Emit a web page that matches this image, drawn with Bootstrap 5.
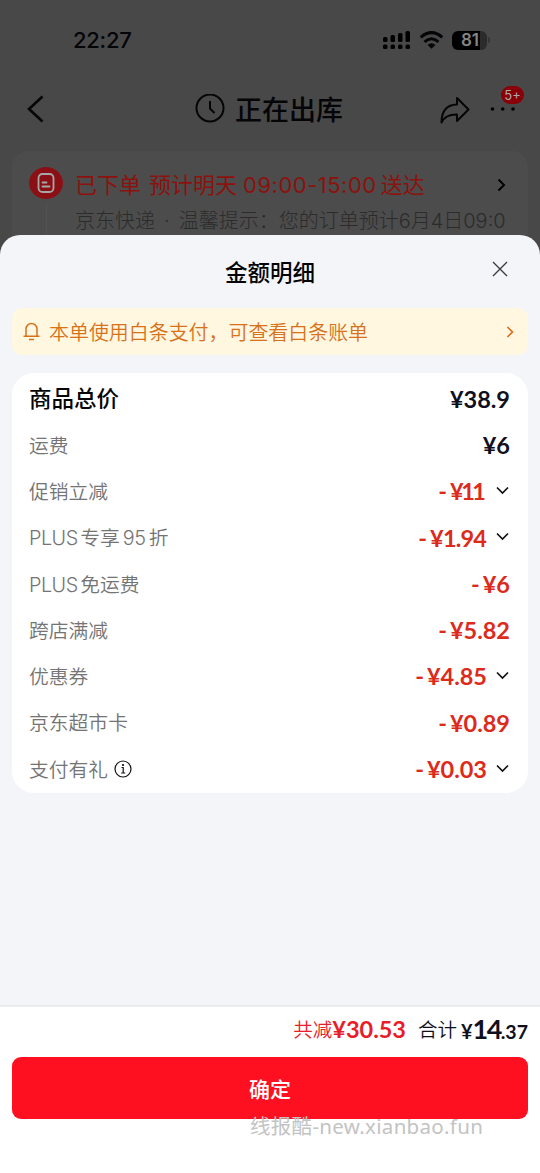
<!DOCTYPE html>
<html lang="zh-CN">
<head>
<meta charset="utf-8">
<meta name="viewport" content="width=device-width, initial-scale=1">
<title>金额明细</title>
<link rel="stylesheet" href="https://cdn.jsdelivr.net/npm/bootstrap@5.3.0/dist/css/bootstrap.min.css">
<style>
body{width:540px;height:1173px;overflow:hidden;background:#484848;color:#050508;font-family:Inter,"Noto Sans CJK SC",sans-serif;line-height:1}
svg{display:block;flex:none;fill:none;stroke:currentColor}
.solid{fill:#000;stroke:none}
.status{height:80px;padding:0 50px 0 73px}
.clock{font-size:22px;font-weight:500;letter-spacing:-.3px}
.batt{width:35px;height:19px;border-radius:6px;background:linear-gradient(90deg,#000 28px,#2b2b2b 28px);color:#858585;font-size:17px;font-weight:600;line-height:19px;text-align:center;padding-left:1px}
.battcap{width:2px;height:6px;border-radius:0 2px 2px 0;background:#333;margin-left:1px}
.navrow{height:71px;padding:0 24px 14px 24px}
.clockwrap{margin-left:149px}
.pagetitle{font-size:27px;font-weight:500;margin:3px 0 0 10px}
.share{margin-left:97px;margin-top:4px}
.more{margin-left:20px}
.count{top:-20px;left:11px;width:23px;height:18px;border-radius:9px;background:#8a0008;color:#aaa;font-size:13px;line-height:18px;text-align:center}
.order{height:84px;margin:0 12px;border-radius:16px 16px 0 0;background:#4c4c4c;padding:16px 18px 0 17px}
.orderdot{width:34px;height:34px;border-radius:50%;background:#8b1015;color:#a7a7a7}
.stem{width:1px;height:34px;background:#515151}
.orderbody{margin-left:12px}
.ordertitle{color:#8b120e;font-size:22px;font-weight:400;height:34px;padding-top:2px}
.hours{margin:0 4px 0 6px;letter-spacing:.5px}
.go{margin-right:4px;color:#000}
.ordersub{color:#2b2b2b;font-size:20px;font-weight:300;height:39px;white-space:nowrap}
.dotsep{margin:0 9px}
.sheet{height:938px;border-radius:20px 20px 0 0;background:#f4f5f9}
.sheethead{height:73px;padding-top:3px}
.sheethead h1{font-size:22.5px;font-weight:500;line-height:1}
.closebtn{right:32px;top:26px;color:#3b3c40}
.notice{height:47px;margin:0 12px;border-radius:10px;background:#fff7df;color:#d7721b;padding:0 14px 0 11px;font-size:19.95px;font-weight:350}
.notice-text{margin:4px 0 0 9px}
.bill{height:420px;margin:18px 12px 0;border-radius:22px;background:#fff;padding:3px 18px 0 17px}
.line{height:46.25px;color:#747474;font-size:19.8px;font-weight:350}
.line.total{color:#050508;font-size:22.5px;font-weight:500}
.lbl{margin-top:3px}
.total .lbl{margin-top:1px}
.latin{letter-spacing:-.5px;margin-right:2.500px}
.n95{margin:0 3px;letter-spacing:-.3px}
.amt{font-family:Lato,"Noto Sans CJK SC",sans-serif;font-weight:700;font-size:23.5px;color:#dd2a1b;white-space:pre;margin-top:1px}
.minus{margin-right:3px}
.tight{letter-spacing:-2.500px;margin-right:3.500px}
.narrow{letter-spacing:-.8px;margin-right:.8px}
.chev{margin-left:8px;margin-top:-1px;color:#111;stroke-width:1.7}
.info{margin-left:6px;color:#111}
.ink{color:#10101c}
.foot{height:168px;background:#fff;border-top:2px solid #eaecec;padding:0 12px}
.sum{height:50px;font-size:19.5px;font-weight:350;padding-bottom:6px}
.sumlbl{margin-top:3px}
.save{color:#e81d29}
.grand{margin-left:4px;margin-top:-1px}
.yen{font-size:20px}
.cents{font-size:19.5px}
.big{font-size:27px;letter-spacing:-1.6px}
.pay{height:62px;border:0;border-radius:9px;background:#ff1021;color:#fff;font-size:21px;font-weight:500;line-height:1;padding-top:8px}
.wm{left:250px;bottom:35px;font-family:"Noto Sans","Noto Sans CJK SC",sans-serif;font-size:20.5px;letter-spacing:.3px;line-height:24px;color:#c3c3c3;white-space:nowrap}
</style>
</head>
<body class="d-flex flex-column">
<header class="status d-flex align-items-center justify-content-between">
  <span class="clock">22:27</span>
  <div class="d-flex align-items-center">
    <svg class="solid" width="28" height="20" viewBox="0 0 28 20"><rect x="0" y="7" width="4.500" height="5" rx="1.5"/><rect x="7.5" y="5" width="4.500" height="7" rx="1.5"/><rect x="15" y="3" width="4.500" height="9" rx="1.5"/><rect x="22.5" y="1" width="4.500" height="11" rx="1.5"/><rect x="0" y="14.500" width="4.500" height="4.500" rx="1.5"/><rect x="7.500" y="14.500" width="4.500" height="4.500" rx="1.500"/><rect x="15" y="14.500" width="4.500" height="4.500" rx="1.5"/><rect x="22.5" y="14.500" width="4.500" height="4.500" rx="1.5"/></svg>
    <svg class="ms-2 me-2" width="25" height="20" viewBox="0 0 25 20" stroke-width="3"><path d="M1.700 7.300Q12.500-2 23.300 7.300M5.500 11.800Q12.500 5.600 19.500 11.800"/><path d="M8.600 15Q12.500 11.500 16.400 15L12.500 18.800Z" fill="currentColor" stroke="none"/></svg>
    <div class="batt">81</div><div class="battcap"></div>
  </div>
</header>
<nav class="navrow d-flex align-items-center">
  <svg width="22" height="28" viewBox="0 0 22 28" stroke-width="2.6"><path d="M18.500 1.500 5 14l13.500 12.500"/></svg>
  <div class="clockwrap d-flex align-items-center">
    <svg width="30" height="30" viewBox="0 0 30 30" stroke-width="2"><circle cx="15" cy="14" r="13.500"/><path d="M15 7v7.500l4.500 4.500"/></svg>
    <span class="pagetitle">正在出库</span>
  </div>
  <svg class="share" width="30" height="28" viewBox="0 0 30 28" stroke-width="2" stroke-linejoin="round"><path d="M17 1 28.500 12.500 17 24V17.500C8.500 17.300 4 20 1.500 25.500 1.500 14.500 6.500 7.800 17 7.500Z"/></svg>
  <div class="more position-relative">
    <svg class="solid" width="26" height="6" viewBox="0 0 26 6"><circle cx="2.500" cy="3" r="1.800"/><circle cx="12.700" cy="3" r="1.800"/><circle cx="23" cy="3" r="1.800"/></svg>
    <span class="count position-absolute">5+</span>
  </div>
</nav>
<section class="order d-flex">
  <div class="d-flex flex-column align-items-center">
    <div class="orderdot d-flex align-items-center justify-content-center"><svg width="18" height="20" viewBox="0 0 18 20" stroke-width="1.8" stroke-linecap="round"><rect x="1.500" y="1" width="15" height="18" rx="4"/><path d="M5.500 9.500h4M5.500 13.500h7"/></svg></div>
    <div class="stem mt-1"></div>
  </div>
  <div class="orderbody flex-grow-1">
    <div class="ordertitle d-flex align-items-center"><span>已下单</span><span class="ms-2">预计明天</span><span class="hours">09:00-15:00</span><span>送达</span>
      <svg class="go ms-auto" width="9" height="14" viewBox="0 0 9 14" stroke-width="2"><path d="m1.500 1.500 5.500 5.500-5.500 5.500"/></svg></div>
    <div class="ordersub d-flex align-items-center"><span>京东快递</span><span class="dotsep">·</span><span>温馨提示：</span><span>您的订单预计6月4日09:0</span></div>
  </div>
</section>
<main class="sheet d-flex flex-column">
  <div class="sheethead d-flex align-items-center justify-content-center position-relative">
    <h1 class="m-0">金额明细</h1>
    <svg class="closebtn position-absolute" width="16" height="16" viewBox="0 0 16 16" stroke-width="1.400"><path d="m1 1 14 14M15 1 1 15"/></svg>
  </div>
  <div class="notice d-flex align-items-center">
    <svg width="17" height="19" viewBox="0 0 17 19" stroke-width="1.500" stroke-linejoin="round"><path d="M3 14V7a5.500 5.500 0 0 1 11 0v7M.5 14.200h16M6 17.500h5"/></svg>
    <span class="notice-text">本单使用白条支付，可查看白条账单</span>
    <svg class="ms-auto" width="8" height="12" viewBox="0 0 8 12" stroke-width="1.700"><path d="m1.500 1 5 5-5 5"/></svg>
  </div>
  <section class="bill">
    <div class="line total d-flex align-items-center justify-content-between"><span class="lbl">商品总价</span><span class="amt ink">¥38.9</span></div>
    <div class="line d-flex align-items-center justify-content-between"><span class="lbl">运费</span><span class="amt ink">¥6</span></div>
    <div class="line d-flex align-items-center"><span class="lbl">促销立减</span><span class="amt minus ms-auto">-</span><span class="amt tight">¥11</span><svg class="chev" width="15" height="10" viewBox="0 0 15 10"><path d="m2 1.500 5.500 5.500L13 1.500"/></svg></div>
    <div class="line d-flex align-items-center"><span class="lbl"><span class="latin">PLUS</span>专享<span class="n95">95</span>折</span><span class="amt minus ms-auto">-</span><span class="amt narrow">¥1.94</span><svg class="chev" width="15" height="10" viewBox="0 0 15 10"><path d="m2 1.500 5.500 5.500L13 1.500"/></svg></div>
    <div class="line d-flex align-items-center"><span class="lbl"><span class="latin">PLUS</span>免运费</span><span class="amt minus ms-auto">-</span><span class="amt">¥6</span></div>
    <div class="line d-flex align-items-center"><span class="lbl">跨店满减</span><span class="amt minus ms-auto">-</span><span class="amt">¥5.82</span></div>
    <div class="line d-flex align-items-center"><span class="lbl">优惠券</span><span class="amt minus ms-auto">-</span><span class="amt">¥4.85</span><svg class="chev" width="15" height="10" viewBox="0 0 15 10"><path d="m2 1.500 5.500 5.500L13 1.500"/></svg></div>
    <div class="line d-flex align-items-center"><span class="lbl">京东超市卡</span><span class="amt minus ms-auto">-</span><span class="amt">¥0.89</span></div>
    <div class="line d-flex align-items-center"><span class="lbl">支付有礼</span><svg class="info" width="18" height="18" viewBox="0 0 18 18" stroke-width="1.200"><circle cx="9" cy="9" r="8"/><path d="M7.500 7.500H9.200V13M7.200 13h4"/><circle cx="9" cy="5" r=".5" fill="currentColor"/></svg><span class="amt minus ms-auto">-</span><span class="amt">¥0.03</span><svg class="chev" width="15" height="10" viewBox="0 0 15 10"><path d="m2 1.500 5.500 5.500L13 1.500"/></svg></div>
  </section>
  <footer class="foot mt-auto position-relative">
    <div class="sum d-flex align-items-center justify-content-end"><span class="sumlbl save">共减</span><span class="amt save">¥30.53</span><span class="sumlbl ink ms-2 ps-1">合计</span><span class="amt ink grand"><span class="yen">¥</span><span class="big">14</span><span class="cents">.37</span></span></div>
    <button class="pay btn w-100 d-flex align-items-center justify-content-center">确定</button>
    <span class="wm position-absolute">线报酷-new.xianbao.fun</span>
  </footer>
</main>
</body>
</html>
